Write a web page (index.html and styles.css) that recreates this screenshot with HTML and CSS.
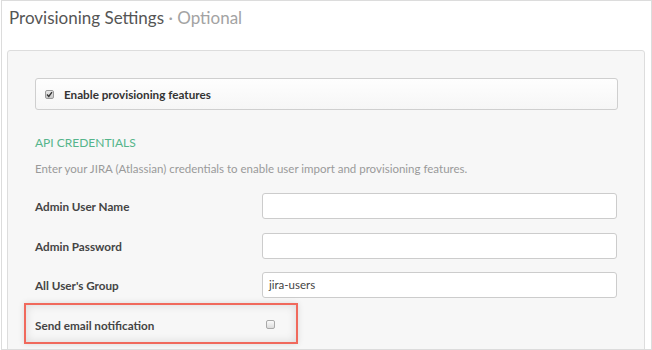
FILE: index.html
```html
<!DOCTYPE html>
<html>
<head>
<meta charset="utf-8">
<link rel="stylesheet" href="styles.css">
</head>
<body>
<div class="page">
  <h1 class="title">Provisioning Settings <span class="opt">· Optional</span></h1>
  <div class="panel">
    <div class="enable-box">
      <span class="cb checked"><svg width="7" height="7" viewBox="0 0 7 7"><path d="M1 3.6 L2.8 5.4 L6 1.2" fill="none" stroke="#333" stroke-width="1.4"/></svg></span>
      <span class="enable-label">Enable provisioning features</span>
    </div>
    <h2 class="section">API CREDENTIALS</h2>
    <p class="desc">Enter your JIRA (Atlassian) credentials to enable user import and provisioning features.</p>
    <div class="form">
      <label class="lbl">Admin User Name</label>
      <div class="input"></div>
      <label class="lbl">Admin Password</label>
      <div class="input"></div>
      <label class="lbl">All User's Group</label>
      <div class="input">jira-users</div>
      <label class="lbl">Send email notification</label>
      <div class="cbcell"><span class="cb"></span></div>
    </div>
  </div>
  <div class="highlight"></div>
</div>
</body>
</html>
```
FILE: styles.css
```css
html, body { margin: 0; padding: 0; background: #fff; }
body { font-family: Lato, "Open Sans", sans-serif; }
.page {
  position: relative;
  margin-left: 1px;
  width: 651px;
  height: 350px;
  box-sizing: border-box;
  border: 1px solid #dcdcdc;
  overflow: hidden;
}
.title {
  margin: 0;
  padding: 6px 0 0 7px;
  height: 49px;
  box-sizing: border-box;
  font-size: 17px;
  font-weight: 400;
  line-height: 22px;
  color: #555;
}
.title .opt { color: #a3a3a3; }
.panel {
  margin: 0 6px 0 5px;
  height: 400px;
  box-sizing: border-box;
  background: #f7f7f7;
  border: 1px solid #dddddd;
  border-radius: 3px;
  padding: 27px 26px 0 27px;
}
.enable-box {
  height: 32px;
  box-sizing: border-box;
  border: 1px solid #cfcfcf;
  border-radius: 3px;
  background: linear-gradient(#fefefe, #f6f6f6);
  display: flex;
  align-items: center;
  padding-left: 9px;
}
.cb {
  width: 9px;
  height: 9px;
  box-sizing: border-box;
  border: 1px solid #a9a9a9;
  border-radius: 2px;
  background: linear-gradient(#fafafa, #dcdcdc);
  display: inline-flex;
  align-items: center;
  justify-content: center;
}
.cb.checked { background: linear-gradient(#e8e8e8, #c8c8c8); border-color: #999; }
.enable-label {
  margin-left: 10px;
  font-size: 11.7px;
  font-weight: 700;
  color: #333;
}
.section {
  margin: 25px 0 0 0;
  font-size: 12px;
  font-weight: 400;
  line-height: 16px;
  color: #55b58b;
}
.desc {
  margin: 11px 0 0 0;
  font-size: 11.5px;
  line-height: 14px;
  color: #9a9a9a;
}
.form {
  margin-top: 17px;
  display: grid;
  grid-template-columns: 227px 355px;
  grid-auto-rows: 26px;
  row-gap: 13.5px;
  align-items: center;
}
.lbl {
  font-size: 11.7px;
  font-weight: 700;
  color: #444;
}
.input {
  height: 26px;
  box-sizing: border-box;
  border: 1px solid #cccccc;
  border-radius: 3px;
  background: #fff;
  padding-left: 6px;
  font-size: 11.5px;
  line-height: 24px;
  color: #444;
}
.cbcell { display: flex; align-items: center; padding-left: 4px; }
.highlight {
  position: absolute;
  left: 22px;
  top: 302px;
  width: 274px;
  height: 41px;
  box-sizing: border-box;
  border: 2px solid #f0695c;
  box-shadow: inset 0 0 10px rgba(0,0,0,0.12), 0 0 6px rgba(0,0,0,0.12);
}
```
